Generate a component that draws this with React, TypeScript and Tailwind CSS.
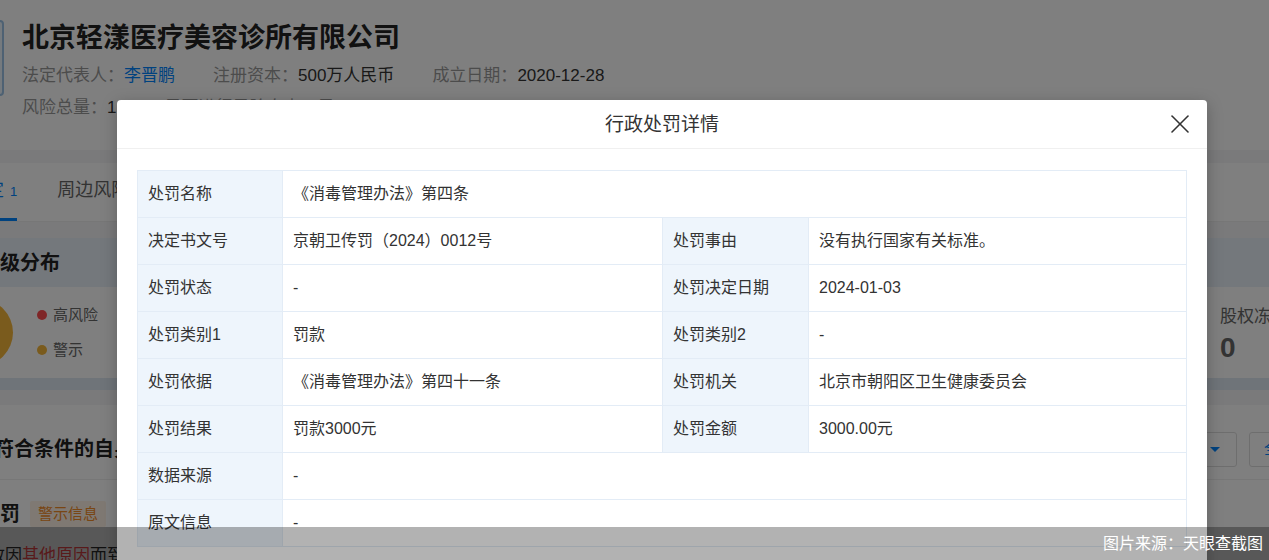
import { X } from 'lucide-react';

const font = { fontFamily: '"Liberation Sans", "Noto Sans CJK SC", sans-serif' };

type Cell = { label: string; value: string };
type Row = Cell[];

const rows: Row[] = [
  [{ label: '处罚名称', value: '《消毒管理办法》第四条' }],
  [
    { label: '决定书文号', value: '京朝卫传罚（2024）0012号' },
    { label: '处罚事由', value: '没有执行国家有关标准。' },
  ],
  [
    { label: '处罚状态', value: '-' },
    { label: '处罚决定日期', value: '2024-01-03' },
  ],
  [
    { label: '处罚类别1', value: '罚款' },
    { label: '处罚类别2', value: '-' },
  ],
  [
    { label: '处罚依据', value: '《消毒管理办法》第四十一条' },
    { label: '处罚机关', value: '北京市朝阳区卫生健康委员会' },
  ],
  [
    { label: '处罚结果', value: '罚款3000元' },
    { label: '处罚金额', value: '3000.00元' },
  ],
  [{ label: '数据来源', value: '-' }],
  [{ label: '原文信息', value: '-' }],
];

function Background() {
  return (
    <div className="flex flex-col bg-[#f4f5f7] text-[#333]">
      {/* Company header */}
      <div className="h-[150px] bg-white flex">
        <div className="mt-[20px] ml-[-60px] w-[64px] h-[76px] rounded-[4px] border-2 border-[#9cc3e6] bg-[#eaf4fd]" />
        <div className="ml-[18px] pt-[21px] flex flex-col">
          <div className="text-[27px] font-bold leading-[34px] text-[#222]">北京轻漾医疗美容诊所有限公司</div>
          <div className="mt-[8px] flex items-center text-[17px] leading-[26px]">
            <span className="text-[#999]">法定代表人：</span>
            <span className="text-[#0084ff]">李晋鹏</span>
            <span className="text-[#999] ml-[38px]">注册资本：</span>
            <span>500万人民币</span>
            <span className="text-[#999] ml-[38px]">成立日期：</span>
            <span>2020-12-28</span>
          </div>
          <div className="mt-[6px] flex items-center text-[17px] leading-[26px]">
            <span className="text-[#999]">风险总量：</span>
            <span>1</span>
            <span className="text-[#999] ml-[48px]">是否进行风险自查：是</span>
          </div>
        </div>
      </div>

      {/* Tabs */}
      <div className="mt-[13px] h-[59px] bg-white flex items-end border-b border-[#eee]">
        <div className="ml-[-14px] h-full flex flex-col justify-end">
          <div className="flex items-baseline gap-[6px] text-[#0084ff] pb-[14px]">
            <span className="text-[18px]">定</span>
            <span className="text-[13px]">1</span>
          </div>
          <div className="h-[3px] w-[31px] bg-[#0084ff]" />
        </div>
        <div className="ml-[40px] pb-[17px] text-[18px] text-[#666]">周边风险</div>
      </div>

      {/* Risk level distribution */}
      <div className="mt-[16px] bg-white flex flex-col">
        <div className="h-[49px] bg-[#e9f1f9] flex items-center text-[20px] font-bold text-[#222]">级分布</div>
        <div className="h-[91px] flex items-center">
          <div className="ml-[-54px] w-[67px] h-[67px] rounded-full bg-[#f5b63a]" />
          <div className="ml-[24px] flex flex-col gap-[12px] text-[15px] text-[#666]">
            <div className="flex items-center gap-[6px]">
              <span className="w-[10px] h-[10px] rounded-full bg-[#ff4d4f]" />
              高风险
            </div>
            <div className="flex items-center gap-[6px]">
              <span className="w-[10px] h-[10px] rounded-full bg-[#f5b63a]" />
              警示
            </div>
          </div>
          <div className="ml-auto w-[49px] flex flex-col gap-[4px] pt-[4px]">
            <span className="text-[17px] leading-[22px] text-[#666] whitespace-nowrap">股权冻结</span>
            <span className="text-[28px] font-bold leading-[32px] text-[#666]">0</span>
          </div>
        </div>
        <div className="h-[12px] bg-[#dfe9f3]" />
      </div>

      {/* Filters */}
      <div className="mt-[15px] h-[75px] pt-[14px] bg-white flex items-center border-b border-[#eee]">
        <span className="ml-[-6px] text-[20px] font-bold text-[#222]">符合条件的自身风险</span>
        <div className="ml-auto flex gap-[12px] mr-[-40px]">
          <div className="w-[60px] h-[35px] rounded-[3px] border border-[#ddd] flex items-center justify-end pr-[16px]">
            <span className="w-0 h-0 border-l-[5px] border-r-[5px] border-t-[5px] border-l-transparent border-r-transparent border-t-[#0084ff]" />
          </div>
          <div className="w-[60px] h-[35px] rounded-[3px] border border-[#ddd] flex items-center pl-[14px] text-[16px] text-[#0084ff]">全部</div>
        </div>
      </div>

      {/* Item */}
      <div className="bg-white h-[100px] flex flex-col">
        <div className="mt-[19px] flex items-center">
          <span className="ml-[-20px] text-[20px] font-bold text-[#222]">处罚</span>
          <span className="ml-[10px] px-[8px] h-[26px] flex items-center rounded-[2px] bg-[#fff3e6] text-[15px] text-[#f28c28]">警示信息</span>
        </div>
        <div className="mt-[14px] ml-[-12px] text-[17px]">
          致因<span className="text-[#ff4d4f]">其他原因</span>而到期
        </div>
      </div>
    </div>
  );
}

function Modal() {
  const label = 'h-[47px] flex items-center pl-[10px] bg-[#eef5fc] border-r border-b border-[#e3ecf6]';
  const value = 'h-[47px] flex items-center pl-[10px] border-r border-b border-[#e3ecf6]';
  return (
    <div className="absolute left-[117px] top-[100px] w-[1090px] h-[520px] bg-white rounded-[4px] shadow-[0_4px_16px_rgba(0,0,0,0.25)] flex flex-col">
      <div className="h-[49px] border-b border-[#f0f0f0] flex items-center justify-center relative">
        <span className="text-[19px] text-[#333] pt-[2px]">行政处罚详情</span>
        <X className="absolute right-[11px] top-[8px] w-[32px] h-[32px] text-[#333]" strokeWidth={1.2} />
      </div>
      <div className="px-[20px] pt-[21px]">
        <div className="grid grid-cols-[145px_380px_146px_1fr] border-l border-t border-[#e3ecf6] text-[16px] text-[#333]">
          {rows.map((row, i) =>
            row.length === 1 ? (
              <div key={i} className="contents">
                <div className={label}>{row[0].label}</div>
                <div className={`col-span-3 ${value}`}>{row[0].value}</div>
              </div>
            ) : (
              <div key={i} className="contents">
                {row.map((c) => (
                  <div key={c.label} className="contents">
                    <div className={label}>{c.label}</div>
                    <div className={value}>{c.value}</div>
                  </div>
                ))}
              </div>
            )
          )}
        </div>
      </div>
    </div>
  );
}

export default function App() {
  return (
    <div className="relative w-[1269px] h-[560px] overflow-hidden" style={font}>
      <Background />
      <div className="absolute inset-0 bg-black/50" />
      <Modal />
      <div className="absolute left-0 right-0 bottom-0 h-[33px] bg-black/30 flex items-center justify-end pr-[6px] text-[16px] text-white">
        图片来源：天眼查截图
      </div>
    </div>
  );
}
